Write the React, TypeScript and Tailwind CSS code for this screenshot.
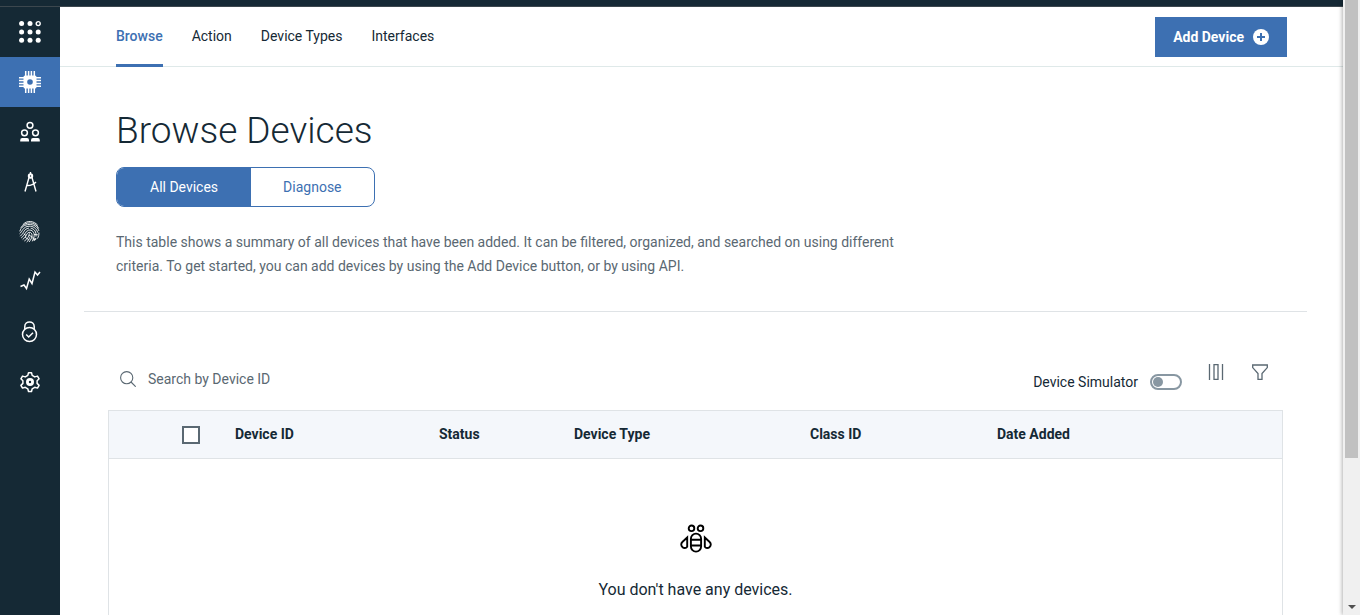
import { useState, type ReactNode } from "react";

function AppsIcon() {
  return (
    <svg className="size-6" viewBox="0 0 24 24" fill="currentColor" aria-hidden="true">
      {[3.6, 12, 20.2].map((y) =>
        [3.6, 12, 20.2].map((x) =>
          x > 20 && y < 4 ? (
            <circle key={`${x}-${y}`} cx={x} cy={y} r="2" fill="none" stroke="currentColor" strokeWidth="1.4" />
          ) : (
            <circle key={`${x}-${y}`} cx={x} cy={y} r="2.5" />
          ),
        ),
      )}
    </svg>
  );
}

function ChipIcon() {
  return (
    <svg className="size-6" viewBox="0 0 24 24" fill="none" stroke="currentColor" strokeWidth="1.5" aria-hidden="true">
      <path d="M7.700 1v22M10.600 1v22M13.400 1v22M16.300 1v22M1 7.700h22M1 10.600h22M1 13.400h22M1 16.300h22" />
      <rect x="5.500" y="5.500" width="13" height="13" rx="1.500" fill="currentColor" stroke="none" />
      <circle cx="12" cy="12" r="2.800" fill="#3d70b2" stroke="none" />
    </svg>
  );
}

function MembersIcon() {
  return (
    <svg className="size-6" viewBox="0 0 24 24" fill="none" stroke="currentColor" strokeWidth="1.5" aria-hidden="true">
      <circle cx="12" cy="5.300" r="2.900" />
      <circle cx="6.500" cy="12.800" r="2.900" />
      <circle cx="17.500" cy="12.800" r="2.900" />
      <path d="M2.200 21.500v-1.200q0-2.200 2-2.200h4.800q2 0 2 2.200v1.200zM13 21.500v-1.200q0-2.200 2-2.200h4.800q2 0 2 2.200v1.200z" fill="currentColor" stroke="none" />
    </svg>
  );
}

function CompassIcon() {
  return (
    <svg className="size-6" viewBox="0 0 24 24" fill="none" stroke="currentColor" strokeWidth="1.4" aria-hidden="true">
      <path d="M12.500 2v2M11 7.500 7 21.500M14 7.500l4 14M8.500 15.500q5.500.5 9.500-3.500" />
      <circle cx="12.500" cy="6" r="2" fill="currentColor" />
      <circle cx="12.500" cy="6" r=".7" fill="#152935" stroke="none" />
    </svg>
  );
}

function FingerprintIcon() {
  return (
    <svg className="size-6" viewBox="0 0 24 24" fill="none" stroke="currentColor" strokeWidth=".9" strokeLinecap="round" aria-hidden="true">
      <path d="M5 4.500C9-.2 16 .8 19.500 5M3 7.500C7 .8 17.500 1.500 20.500 8M1.900 11C4 2.500 18 2 20.800 10.500M1.900 13.500C4.500 11.500 5 6.500 11 6.200c4-.2 7.500 2 8.600 6M2.500 16C6.500 12.500 5.500 9 10.500 8.200M13 8.200c3.500.8 5.500 3.500 5 8M3.500 17.800c4-2.800 3.500-6.500 7-7.600 3.500-.9 6 2.300 5.700 5.300-.1 1.800-.7 3.600-1.700 5.500M5 19.300c3.500-2.300 3.300-6.300 6-7 2-.3 3.300 1.500 3 3.400-.3 2.200-1.200 4.300-2.700 6M6.700 20.800c3-2 4-4.300 4.700-7M9 21.800c1.500-1.300 2.200-2.600 2.700-4.200M17.600 18.500l-1 2M20.900 13c.1 1.800-.2 3.300-1.200 5.200M7.500 17.500l3 2M6 14l2 1.500M14 17.800l2.300.6M16.500 14.500l3 .3M15 20l3-1M11 15.500l3 1" />
    </svg>
  );
}

function TrendIcon() {
  return (
    <svg className="size-6" viewBox="0 0 24 24" fill="none" stroke="currentColor" strokeWidth="1.5" aria-hidden="true">
      <path d="m2.500 16.500 3.500-1.500 2.500 3.500 2.700-9.500 2.800 4.500 3-11.500 2.500 3L22 2" />
    </svg>
  );
}

function LockIcon() {
  return (
    <svg className="size-6" viewBox="0 0 24 24" fill="none" stroke="currentColor" strokeWidth="1.5" aria-hidden="true">
      <circle cx="11.500" cy="14.500" r="7" />
      <path d="M6.800 9V6.500c0-6 9.400-6 9.400 0V9M8.200 14.500l2.500 2.500 4.300-4.300" />
    </svg>
  );
}

function GearIcon() {
  return (
    <svg className="size-6" viewBox="0 0 24 24" fill="none" stroke="currentColor" strokeWidth="1.500" strokeLinejoin="round" aria-hidden="true">
      <path d="M10.500 2.700h3l.7 2.700 2.500 1.500 2.800-.8 1.600 2.700-2 2v2.600l2 2-1.600 2.700-2.800-.8-2.500 1.500-.7 2.700h-3l-.7-2.700-2.500-1.500-2.800.8-1.600-2.700 2-2v-2.600l-2-2 1.600-2.700 2.800.8 2.500-1.500z" />
      <circle cx="12" cy="12" r="2.600" strokeWidth="2.800" />
    </svg>
  );
}

function BeeIcon() {
  return (
    <svg className="size-8" viewBox="0 0 32 32" fill="none" stroke="currentColor" strokeWidth="1.900" aria-hidden="true">
      <circle cx="11.500" cy="5.300" r="2.800" />
      <circle cx="20.500" cy="5.300" r="2.800" />
      <rect x="10.900" y="10.600" width="10.200" height="18" rx="5.100" />
      <path d="M11 16.700h10M11 22.500h10M7.200 14.500v9.200c-1.200 1.700-3.300 1.600-4.600.5-2-1.700-1.700-4 0-5.500zM24.800 14.500v9.200c1.200 1.700 3.300 1.600 4.600.5 2-1.700 1.700-4 0-5.500z" />
    </svg>
  );
}

const sections: { label: string; icon: ReactNode }[] = [
  { label: "Boards", icon: <AppsIcon /> },
  { label: "Devices", icon: <ChipIcon /> },
  { label: "Members", icon: <MembersIcon /> },
  { label: "Apps", icon: <CompassIcon /> },
  { label: "Access", icon: <FingerprintIcon /> },
  { label: "Usage", icon: <TrendIcon /> },
  { label: "Security", icon: <LockIcon /> },
  { label: "Settings", icon: <GearIcon /> },
];

const tabs = ["Browse", "Action", "Device Types", "Interfaces"];

const columns = [
  { label: "Device ID", width: "w-[204px]" },
  { label: "Status", width: "w-[135px]" },
  { label: "Device Type", width: "w-[236px]" },
  { label: "Class ID", width: "w-[187px]" },
  { label: "Date Added", width: "w-auto" },
];

function Sidebar() {
  return (
    <nav aria-label="Sections" className="w-15 shrink-0 bg-[#152935] text-white">
      {sections.map(({ label, icon }) => (
        <a
          key={label}
          href="#"
          aria-label={label}
          className={
            label === "Devices"
              ? "flex h-[50px] items-center justify-center bg-[#3d70b2]"
              : "flex h-[50px] items-center justify-center"
          }
        >
          {icon}
        </a>
      ))}
    </nav>
  );
}

function Header() {
  return (
    <header className="flex h-15 items-stretch justify-between border-b border-[#dfe9e9] pr-14 pl-14">
      <nav aria-label="Devices" className="flex gap-[29px]">
        {tabs.map((tab) => (
          <a
            key={tab}
            href="#"
            className={
              tab === "Browse"
                ? "-mb-px flex items-center border-b-3 border-[#3d70b2] font-medium text-[#3d70b2]"
                : "flex items-center pb-0.5"
            }
          >
            {tab}
          </a>
        ))}
      </nav>
      <button className="flex h-10 items-center gap-[9px] self-center bg-[#3d70b2] px-[18px] font-bold text-white">
        Add Device
        <svg className="size-4" viewBox="0 0 16 16" aria-hidden="true">
          <circle cx="8" cy="8" r="8" fill="#fff" />
          <path d="M8 4v8M4 8h8" stroke="#3d70b2" strokeWidth="2" />
        </svg>
      </button>
    </header>
  );
}

function Toolbar() {
  const [simulator, setSimulator] = useState(false);
  return (
    <div className="flex h-[98px] items-center justify-between pt-9 pr-[13px] pl-3 text-[#5a6872]">
      <label className="flex items-center gap-3">
        <svg className="size-4" viewBox="0 0 16 16" fill="none" stroke="currentColor" strokeWidth="1.100" aria-hidden="true">
          <circle cx="6.700" cy="6.700" r="6.100" />
          <path d="m11 11 4.700 4.700" />
        </svg>
        <input
          type="search"
          aria-label="Search by Device ID"
          placeholder="Search by Device ID"
          className="w-60 outline-none placeholder:text-[#5a6872]"
        />
      </label>
      <div className="flex items-center gap-6 pt-0.5">
        <label className="flex items-center gap-3 pt-1 text-[#152935]">
          Device Simulator
          <input
            type="checkbox"
            role="switch"
            checked={simulator}
            onChange={() => setSimulator(!simulator)}
            className="h-4 w-8 appearance-none rounded-full border-2 border-[#8897a2] before:m-px before:block before:size-[10px] before:rounded-full before:bg-[#8897a2] checked:before:ml-[17px]"
          />
        </label>
        <button aria-label="Columns" className="mb-4 flex w-5 justify-center">
          <svg className="size-4" viewBox="0 0 16 16" fill="none" stroke="currentColor" strokeWidth="1.300" aria-hidden="true">
            <path d="M1.500 0v16M14.500 0v16M6 .6h4v14.800H6z" />
          </svg>
        </button>
        <button aria-label="Filter" className="mb-4 flex w-5 justify-center">
          <svg className="size-4" viewBox="0 0 16 16" fill="none" stroke="currentColor" strokeWidth="1.300" aria-hidden="true">
            <path d="M.7 1h14.600v2.600L10 9.500v5.800H6V9.500L.7 3.600z" />
          </svg>
        </button>
      </div>
    </div>
  );
}

function DeviceTable() {
  return (
    <div className="border border-[#dfe3e6]">
      <table className="w-full table-fixed text-left">
        <thead>
          <tr className="h-[47px] border-b border-[#dfe3e6] bg-[#f4f7fb]">
            <th className="w-[126px] pt-0.5 pl-[73px]">
              <input
                type="checkbox"
                aria-label="Select all devices"
                className="block size-[18px] appearance-none border-2 border-[#5a6872] bg-white checked:bg-[#3d70b2]"
              />
            </th>
            {columns.map(({ label, width }) => (
              <th key={label} className={`${width} font-bold`}>
                {label}
              </th>
            ))}
          </tr>
        </thead>
        <tbody>
          <tr>
            <td colSpan={6} className="pt-16 pb-16">
              <div className="flex flex-col items-center gap-[23px] text-base text-[#152935]">
                <span className="text-black">
                  <BeeIcon />
                </span>
                <p>You don't have any devices.</p>
              </div>
            </td>
          </tr>
        </tbody>
      </table>
    </div>
  );
}

function ScrollTrack() {
  return (
    <div aria-hidden="true" className="flex w-[17px] shrink-0 flex-col items-center justify-between bg-[#f0f0f0] pb-1 shadow-[-1px_0_4px_rgba(0,0,0,0.3)]">
      <div className="h-3/4 w-[13px] bg-[#c1c1c1]" />
      <svg className="h-2 w-2" viewBox="0 0 8 8">
        <path d="M0 2h8L4 6z" fill="#505050" />
      </svg>
    </div>
  );
}

export default function App() {
  const [view, setView] = useState("All Devices");
  return (
    <div className="flex h-screen overflow-hidden bg-white font-['Roboto',sans-serif] text-sm text-[#152935]">
      <div className="flex min-w-0 flex-1 flex-col">
        <div className="h-[7px] shrink-0 border-b border-[#3c474e] bg-[#152935]" />
        <div className="flex min-h-0 flex-1">
          <Sidebar />
          <div className="min-w-0 flex-1 overflow-hidden">
            <Header />
            <main className="pr-9 pl-6">
              <section className="border-b border-[#dfe3e6] px-8 pt-10 pb-[33px]">
                <h1 className="text-[37px] leading-12 font-light">Browse Devices</h1>
                <div className="mt-3 flex h-10 w-fit overflow-hidden rounded-lg border border-[#3d70b2]">
                  {["All Devices", "Diagnose"].map((name) => (
                    <button
                      key={name}
                      onClick={() => setView(name)}
                      className={
                        view === name ? "bg-[#3d70b2] px-[33px] text-white" : "px-8 text-[#3d70b2]"
                      }
                    >
                      {name}
                    </button>
                  ))}
                </div>
                <p className="mt-[23px] max-w-[800px] leading-6 text-[#5a6872]">
                  This table shows a summary of all devices that have been added. It can be filtered, organized, and
                  searched on using different criteria. To get started, you can add devices by using the Add Device
                  button, or by using API.
                </p>
              </section>
              <section className="px-6">
                <Toolbar />
                <DeviceTable />
              </section>
            </main>
          </div>
        </div>
      </div>
      <ScrollTrack />
    </div>
  );
}
